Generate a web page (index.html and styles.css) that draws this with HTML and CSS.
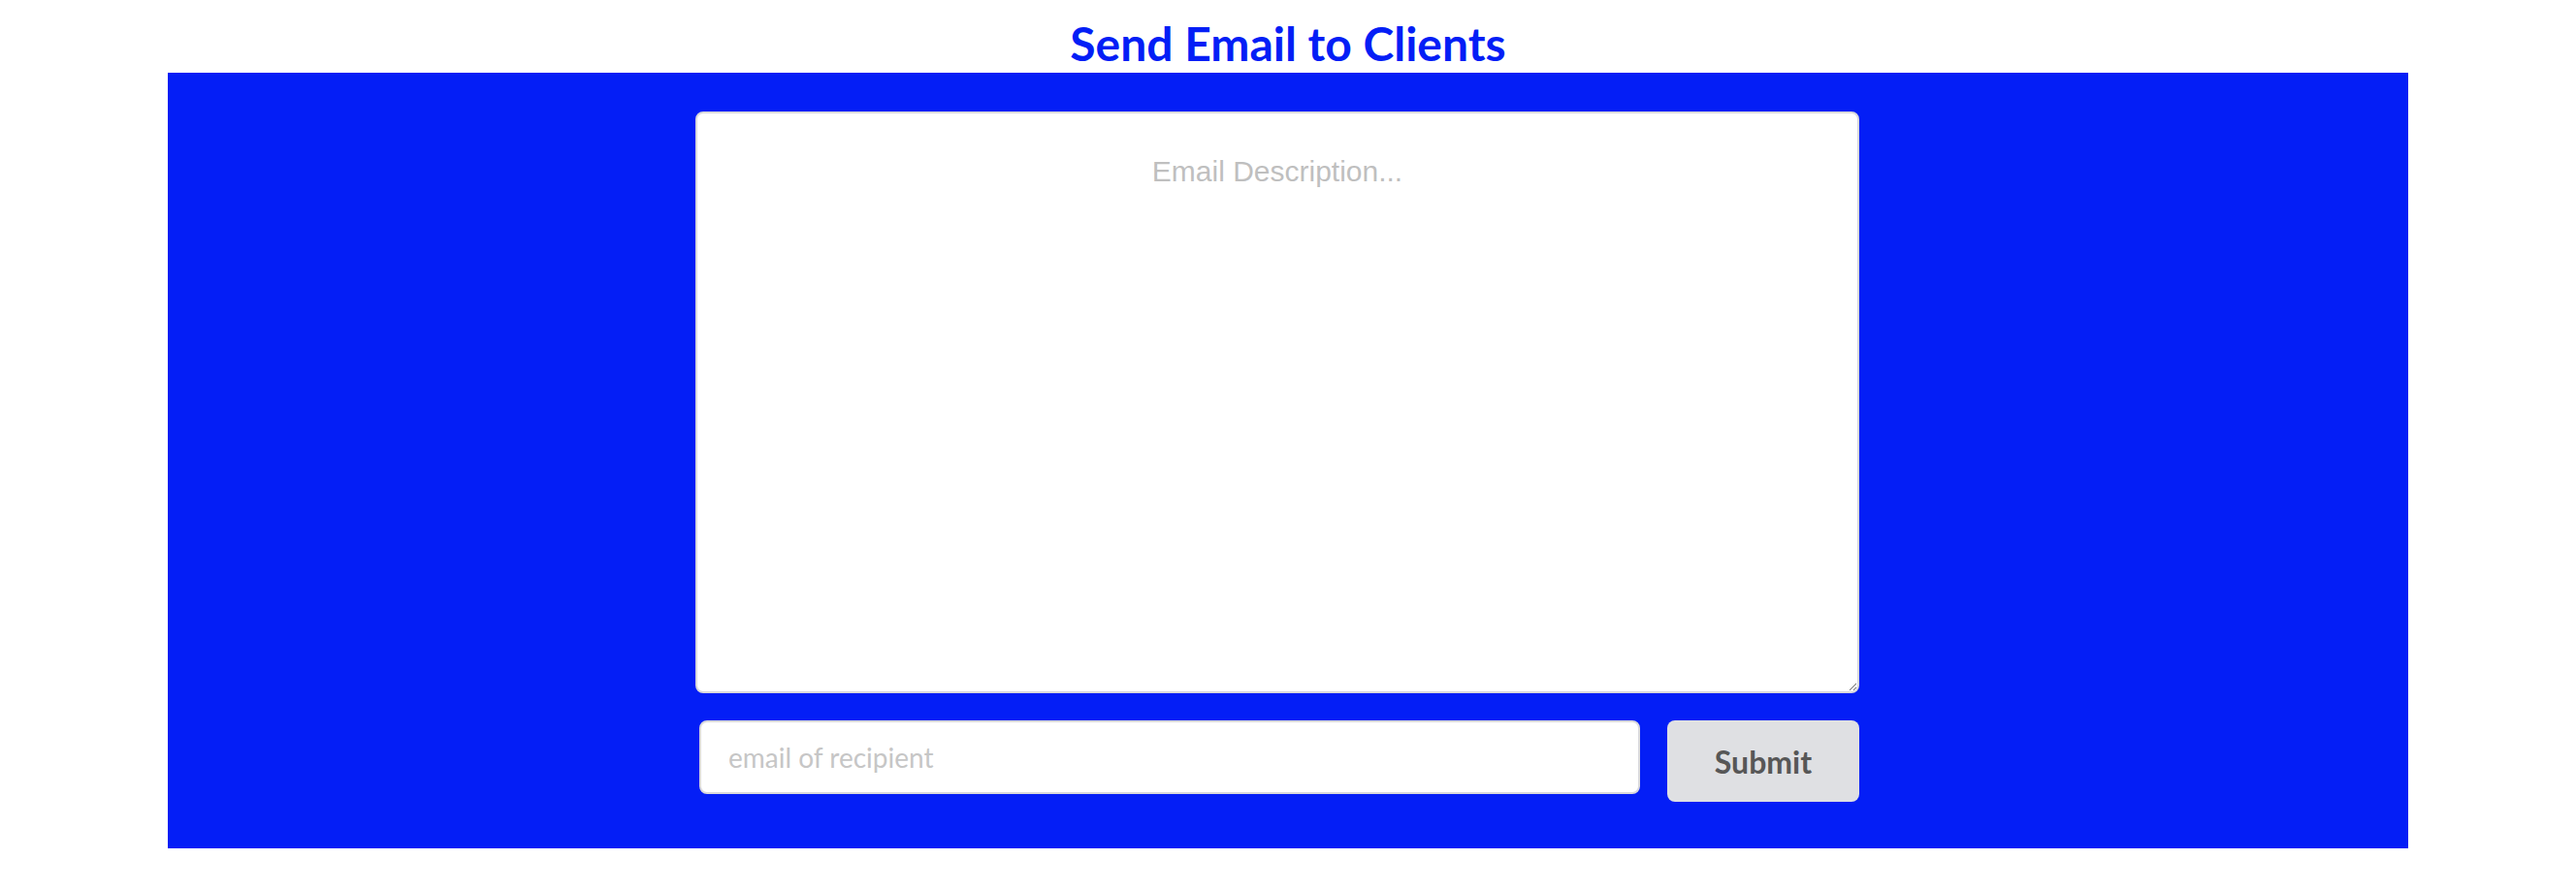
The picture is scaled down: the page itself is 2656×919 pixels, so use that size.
FILE: index.html
```html
<!DOCTYPE html>
<html lang="en">
<head>
<meta charset="utf-8">
<title>Send Email to Clients</title>
<link rel="stylesheet" href="styles.css">
</head>
<body>
  <h1 class="title">Send Email to Clients</h1>
  <section class="panel">
    <form class="email-form">
      <textarea class="description" placeholder="Email Description..."></textarea>
      <div class="send-row">
        <input class="recipient" type="email" placeholder="email of recipient">
        <button class="submit" type="button">Submit</button>
      </div>
    </form>
  </section>
</body>
</html>
```

FILE: styles.css
```css
* {
  box-sizing: border-box;
}

body {
  margin: 0;
  background: #ffffff;
  font-family: Lato, "Noto Sans", sans-serif;
}

.title {
  margin: 16px 0 2px;
  font-family: Lato, sans-serif;
  font-weight: 700;
  font-size: 48px;
  line-height: 57px;
  text-align: center;
  color: #041ef6;
}

.panel {
  width: 2310px;
  height: 800px;
  margin: 0 auto;
  background: #041ef6;
  padding-top: 40px;
}

.email-form {
  width: 1222px;
  margin: 0 auto;
  padding-right: 22px;
  display: flex;
  flex-direction: column;
  gap: 28px;
}

.description {
  display: block;
  width: 1200px;
  height: 600px;
  margin: 0;
  border: 2px solid #d9d9dc;
  border-radius: 8px;
  background: #ffffff;
  padding: 43px 20px 20px;
  font-family: "Liberation Sans", Arial, sans-serif;
  font-size: 30px;
  text-align: center;
  color: #333;
  resize: both;
  outline: none;
}

.description::placeholder {
  color: #bfbfbf;
}

.send-row {
  display: flex;
  align-items: flex-start;
  gap: 28px;
  padding-left: 4px;
}

.recipient {
  flex: 1;
  height: 76px;
  margin: 0;
  border: 2px solid #d9d9dc;
  border-radius: 8px;
  background: #ffffff;
  padding: 0 28px;
  font-family: Lato, sans-serif;
  font-size: 28px;
  color: #333;
  outline: none;
}

.recipient::placeholder {
  color: #c6c6c6;
}

.submit {
  width: 198px;
  height: 84px;
  margin: 0;
  border: none;
  border-radius: 8px;
  background: #dfe0e3;
  font-family: Lato, sans-serif;
  font-weight: 700;
  font-size: 32px;
  color: #575757;
  cursor: pointer;
}
```
